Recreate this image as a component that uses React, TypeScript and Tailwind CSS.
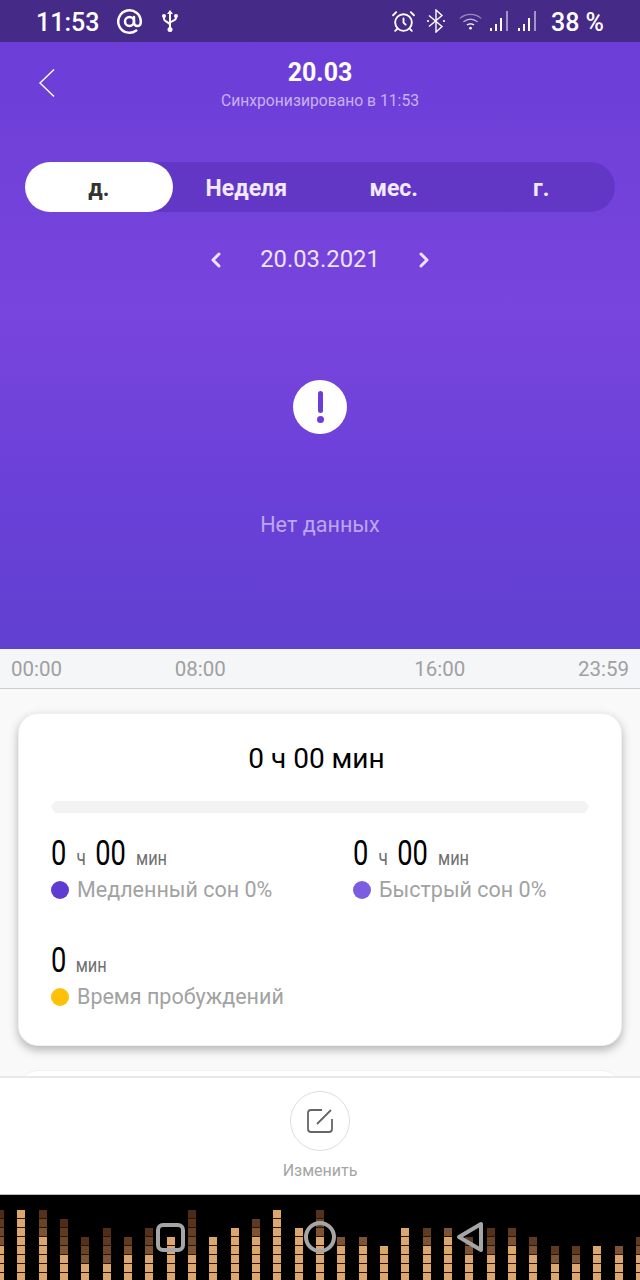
import { AlarmClock, AtSign, ChevronLeft, ChevronRight } from 'lucide-react'

const tabs = ['д.', 'Неделя', 'мес.', 'г.']

// [total segments, bright segments]
const bars = [
  [8, 4], [8, 8], [8, 5], [7, 3], [5, 2], [6, 2], [5, 3], [6, 3], [5, 5], [8, 3], [5, 5],
  [6, 6], [7, 5], [8, 8], [6, 6], [8, 5], [5, 4], [5, 4], [4, 4], [6, 6], [6, 4], [6, 5],
  [5, 3], [6, 3], [6, 4], [5, 3], [4, 2], [4, 2], [4, 4], [4, 3], [5, 3],
]

function Legend({ color, label }: { color: string; label: string }) {
  return (
    <div className="mt-[7px] flex items-center gap-[8px] h-[24px]">
      <span className={`size-[18px] rounded-full ${color}`} />
      <span className="pt-[1px] text-[21.5px] text-[#a2a2a2] whitespace-nowrap">{label}</span>
    </div>
  )
}

function Duration() {
  return (
    <div className="h-[34px] origin-left scale-x-[0.78] whitespace-nowrap leading-[34px] text-black text-[35px]">
      0<span className="ml-[13px] text-[22px] text-[#6f6f6f]">ч</span>
      <span className="ml-[12px]">00</span>
      <span className="ml-[13px] text-[21px] text-[#6f6f6f]">мин</span>
    </div>
  )
}

function StatusBar() {
  return (
    <div className="h-[42px] bg-[#452a87] flex items-center pl-[36px] pr-[36px] text-white shrink-0">
      <span className="pt-[4px] text-[25px] font-medium">11:53</span>
      <AtSign className="ml-[17px] size-[27px]" strokeWidth={2.2} />
      <svg className="ml-[19px] w-[16px] h-[22px]" viewBox="0 0 16 22" fill="none" stroke="white" strokeWidth="2">
        <path d="M8 3v16M2 7v2c0 3 6 3 6 6M14 7v1c0 3-6 3-6 5" />
        <path d="M8 0l3 4H5z" fill="white" stroke="none" />
        <circle cx="2" cy="6" r="2" fill="white" stroke="none" />
        <circle cx="14" cy="6" r="2" fill="white" stroke="none" />
        <circle cx="8" cy="19.500" r="2.500" fill="white" stroke="none" />
      </svg>
      <AlarmClock className="ml-auto size-[25px]" strokeWidth={1.8} />
      <svg className="ml-[9px] w-[22px] h-[24px]" viewBox="0 0 22 24" fill="none" stroke="white" strokeWidth="1.400">
        <path d="M4 6.500l13 11-6 5.500V1l6 5.500-13 11" />
        <circle cx="3" cy="12" r="1.100" fill="white" stroke="none" />
        <circle cx="19" cy="12" r="1.100" fill="white" stroke="none" />
      </svg>
      <svg className="ml-[11px] w-[25px] h-[22px]" viewBox="0 0 28 22" fill="none" stroke="white" strokeWidth="1.300">
        <path d="M2 8c7-6 17-6 24 0" opacity="0.45" />
        <path d="M6 12c5-4 11-4 16 0" opacity="0.7" />
        <path d="M10 15.500c3-2 5-2 8 0" />
        <circle cx="14" cy="19" r="1.500" fill="white" stroke="none" />
      </svg>
      {[0, 1].map((i) => (
        <svg key={i} className={`w-[18px] h-[22px] ${i ? 'ml-[10px]' : 'ml-[7px]'}`} viewBox="0 0 18 22" fill="white">
          <rect x="0" y="18" width="2" height="3" />
          <rect x="5" y="14" width="2" height="7" />
          <rect x="10" y="8" width="2" height="13" />
          <rect x="16" y="1" width="2" height="20" opacity="0.5" />
        </svg>
      ))}
      <span className="pt-[4px] ml-[15px] text-[25px] font-medium whitespace-nowrap">38 %</span>
    </div>
  )
}

function HeroPanel() {
  return (
    <div className="h-[607px] shrink-0 bg-[linear-gradient(180deg,#6c3ed7_0%,#7845de_45%,#6a40d8_75%,#6140d0_100%)] flex flex-col items-center">
      <div className="relative w-full h-[120px] flex flex-col items-center pt-[15px]">
        <svg className="absolute left-[38px] top-[26px] w-[18px] h-[30px]" viewBox="0 0 18 30" fill="none" stroke="white" strokeWidth="1.400">
          <path d="M16 1.500L2 15l14 13.500" />
        </svg>
        <div className="text-[25px] leading-[32px] font-bold text-white">20.03</div>
        <div className="text-[15.7px] leading-[24px] text-[#c7b1f3]">Синхронизировано в 11:53</div>
      </div>
      <div className="w-[590px] h-[50px] rounded-full bg-[#6337c5] grid grid-cols-4">
        {tabs.map((t, i) => (
          <div
            key={t}
            className={`flex items-center justify-center rounded-full pt-[5px] text-[23px] font-bold ${
              i === 0 ? 'bg-white text-[#333333]' : 'text-[#f1e9ff]'
            }`}
          >
            {t}
          </div>
        ))}
      </div>
      <div className="mt-[28px] h-[38px] flex items-center pt-[1px] text-[#ece3fd]">
        <ChevronLeft className="size-[24px]" strokeWidth={3} />
        <span className="mx-[32px] text-[23.8px]">20.03.2021</span>
        <ChevronRight className="size-[24px]" strokeWidth={3} />
      </div>
      <div className="mt-[102px] size-[54px] rounded-full bg-white flex flex-col items-center justify-center gap-[3px]">
        <span className="w-[5px] h-[22px] rounded-full bg-[#6c3ed7]" />
        <span className="size-[7px] rounded-full bg-[#6c3ed7]" />
      </div>
      <div className="mt-[77px] text-[21.6px] leading-[28px] text-[#bda6f0]">Нет данных</div>
    </div>
  )
}

function SleepCard() {
  return (
    <div className="h-[333px] shrink-0 rounded-[20px] bg-white border border-[#f0f0f0] shadow-[0_4px_10px_rgba(0,0,0,0.28)] px-[32px]">
      <div className="mt-[27px] pr-[7px] text-center text-[28px] leading-[36px] text-black">0 ч 00 мин</div>
      <div className="mt-[24px] h-[12px] bg-[#f3f3f3] [clip-path:polygon(0_50%,4px_0,calc(100%-4px)_0,100%_50%,calc(100%-4px)_100%,4px_100%)]" />
      <div className="mt-[24px] grid grid-cols-2">
        <div>
          <Duration />
          <Legend color="bg-[#5f3bd2]" label="Медленный сон 0%" />
        </div>
        <div className="pl-[33px]">
          <Duration />
          <Legend color="bg-[#7a5de0]" label="Быстрый сон 0%" />
        </div>
      </div>
      <div className="mt-[42px]">
        <div className="h-[34px] origin-left scale-x-[0.78] whitespace-nowrap leading-[34px] text-[35px] text-black">
          0<span className="ml-[12px] text-[21px] text-[#6f6f6f]">мин</span>
        </div>
        <Legend color="bg-[#ffc107]" label="Время пробуждений" />
      </div>
    </div>
  )
}

function NavBar() {
  return (
    <div className="relative h-[85px] flex-1 bg-black border-t border-[#bdbdbd] overflow-hidden">
      <div className="absolute inset-0 flex items-end gap-[13.33px] ml-[-4px] mb-[-1px]">
        {bars.map(([total, bright], i) => (
          <div key={i} className="w-[8px] shrink-0 flex flex-col gap-[1px] bg-[#2e1105]">
            {Array.from({ length: total }).map((_, s) => (
              <div
                key={s}
                className="h-[8px] bg-[#dca76c]"
                style={{ opacity: s < total - bright ? 0.1 + (0.35 * (s + 1)) / (total - bright) : 1 }}
              />
            ))}
          </div>
        ))}
      </div>
      <div className="absolute left-[156px] top-[28px] size-[29px] rounded-[7px] border-[4px] border-[#a6a6a6]" />
      <div className="absolute left-[304px] top-[26px] size-[32px] rounded-full border-[4px] border-[#a6a6a6]" />
      <svg className="absolute left-[456px] top-[26px] w-[28px] h-[32px]" viewBox="0 0 28 32" fill="none" stroke="#a6a6a6" strokeWidth="4" strokeLinejoin="round">
        <path d="M3 16L25 3v26z" />
      </svg>
    </div>
  )
}

export default function App() {
  return (
    <div className="w-[640px] h-[1280px] flex flex-col bg-[#f9f9f9] overflow-hidden font-['Roboto',sans-serif]">
      <StatusBar />
      <HeroPanel />
      <div className="h-[40px] shrink-0 bg-[#f5f6f8] border-b border-[#cccccc] pt-[2px] text-[20.5px] text-[#a0a0a0] flex items-center justify-between px-[11px]">
        <span>00:00</span>
        <span className="mr-[38px]">08:00</span>
        <span className="ml-[38px]">16:00</span>
        <span>23:59</span>
      </div>
      <div className="h-[387px] shrink-0 px-[18px] pt-[24px] overflow-hidden flex flex-col gap-[24px]">
        <SleepCard />
        <div className="h-[40px] shrink-0 rounded-[20px] bg-white border border-[#f0f0f0]" />
      </div>
      <div className="h-[118px] shrink-0 bg-white border-t-2 border-[#e8e8e8] flex flex-col items-center pt-[13px]">
        <div className="size-[60px] rounded-full border border-[#dddddd] flex items-center justify-center">
          <svg className="size-[26px]" viewBox="0 0 26 26" fill="none" stroke="#666666" strokeWidth="1.800">
            <path d="M15 2H4a3 3 0 0 0-3 3v16a3 3 0 0 0 3 3h18a3 3 0 0 0 3-3V11" />
            <path d="M10 16L24 2" />
          </svg>
        </div>
        <div className="mt-[8px] text-[16px] text-[#a5a5a5]">Изменить</div>
      </div>
      <NavBar />
    </div>
  )
}
